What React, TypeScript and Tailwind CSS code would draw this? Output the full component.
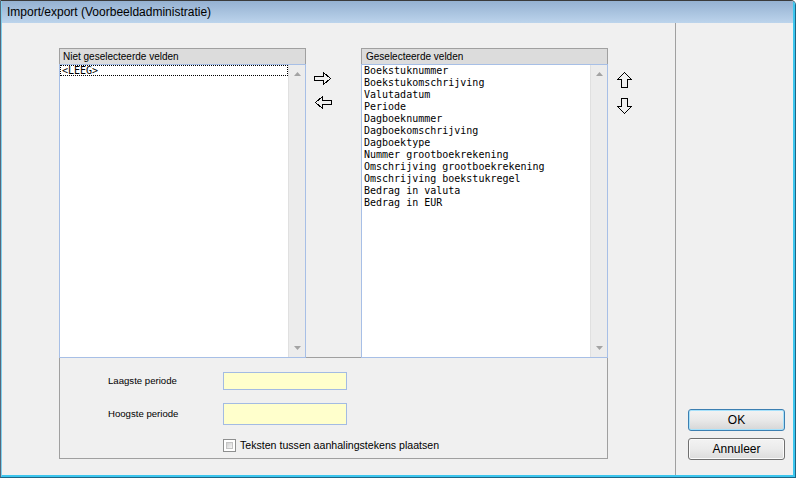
import React from "react";

const mono = { fontFamily: '"DejaVu Sans Mono", "Liberation Mono", monospace' };
const sans = { fontFamily: '"Liberation Sans", Arial, sans-serif' };

function ScrollBar() {
  return (
    <div className="w-[17px] h-full bg-[#ececec] border-l border-[#e0e0e0] flex flex-col items-center justify-between pt-[7px] pb-[7px]">
      <svg width="7" height="4" viewBox="0 0 7 4">
        <polygon points="0,4 3.5,0 7,4" fill="#a3a3a3" />
      </svg>
      <svg width="7" height="4" viewBox="0 0 7 4">
        <polygon points="0,0 3.5,4 7,0" fill="#a3a3a3" />
      </svg>
    </div>
  );
}

function RightArrow({ flip }: { flip?: boolean }) {
  return (
    <svg width="18" height="13" viewBox="0 0 18 13" style={flip ? { transform: "scaleX(-1)" } : undefined}>
      <polygon
        points="0.5,4.5 9.5,4.5 9.5,0.5 16.5,6.5 9.5,12.5 9.5,8.5 0.5,8.5"
        fill="none"
        stroke="#000"
        strokeWidth="1"
        shapeRendering="crispEdges"
      />
    </svg>
  );
}

function UpArrow({ flip }: { flip?: boolean }) {
  return (
    <svg width="16" height="16" viewBox="0 0 16 16" style={flip ? { transform: "scaleY(-1)" } : undefined}>
      <polygon
        points="7.5,0.5 14.5,7.5 10.5,7.5 10.5,15.5 4.5,15.5 4.5,7.5 0.5,7.5"
        fill="none"
        stroke="#000"
        strokeWidth="1"
        shapeRendering="crispEdges"
      />
    </svg>
  );
}

const selected = [
  "Boekstuknummer",
  "Boekstukomschrijving",
  "Valutadatum",
  "Periode",
  "Dagboeknummer",
  "Dagboekomschrijving",
  "Dagboektype",
  "Nummer grootboekrekening",
  "Omschrijving grootboekrekening",
  "Omschrijving boekstukregel",
  "Bedrag in valuta",
  "Bedrag in EUR",
];

export default function App() {
  return (
    <div
      className="w-[796px] h-[478px] flex flex-col bg-[#f0f0f0] border-t border-t-[#3a3a3a] border-l border-l-[#56687a] border-r border-r-[#1d6585] border-b border-b-[#1d6585] rounded-tr-[5px] overflow-hidden"
      style={sans}
    >
      <div className="flex-1 flex flex-col border-l border-l-[#7fd0ee] border-r-2 border-r-[#3cc6ee] border-b-2 border-b-[#3cc6ee]">
        {/* Title bar */}
        <div className="h-[22px] bg-gradient-to-b from-[#95b1d1] to-[#bcd4ec] flex items-center pl-[5px] text-[12px] text-black">
          Import/export (Voorbeeldadministratie)
        </div>

        {/* Body */}
        <div className="flex-1 flex">
          {/* Main area */}
          <div className="w-[673px] pt-[25px] pl-[57px] flex items-start">
            <div className="w-[549px] flex flex-col">
              <div className="flex h-[310px]">
                {/* Left panel */}
                <div className="w-[247px] flex flex-col">
                  <div className="h-[16px] border-t border-l border-r border-[#a0a0a0] bg-[#dcdcdc] text-[10px] leading-[15px] pl-[3px] text-black">
                    Niet geselecteerde velden
                  </div>
                  <div className="flex-1 border border-[#a7bfe6] bg-white flex">
                    <div className="flex-1">
                      <div
                        className="h-[11px] border border-dotted border-black leading-[9px] pl-[1px] text-[10px] text-black"
                        style={mono}
                      >
                        &lt;LEEG&gt;
                      </div>
                    </div>
                    <ScrollBar />
                  </div>
                </div>

                {/* Middle transfer arrows */}
                <div className="w-[55px] border-b border-[#a0a0a0] pt-[24px] pl-[8px] flex flex-col gap-[11px]">
                  <RightArrow />
                  <RightArrow flip />
                </div>

                {/* Right panel */}
                <div className="w-[247px] flex flex-col">
                  <div className="h-[16px] border-t border-l border-r border-[#a0a0a0] bg-[#dcdcdc] text-[10px] leading-[15px] pl-[4px] text-black">
                    Geselecteerde velden
                  </div>
                  <div className="flex-1 border border-[#a7bfe6] bg-white flex">
                    <div className="flex-1 pl-[2px]" style={mono}>
                      {selected.map((s) => (
                        <div key={s} className="h-[12px] leading-[12px] text-[10px] text-black whitespace-pre">
                          {s}
                        </div>
                      ))}
                    </div>
                    <ScrollBar />
                  </div>
                </div>
              </div>

              {/* Bottom section */}
              <div className="h-[101px] border-l border-r border-b border-[#a0a0a0] pt-[14px] pl-[48px] flex flex-col">
                <div className="flex items-center h-[18px]">
                  <div className="w-[115px] text-[9.6px] text-black">Laagste periode</div>
                  <div className="w-[124px] h-[18px] border border-[#a3bbe3] bg-[#ffffcc]" />
                </div>
                <div className="flex items-center h-[22px] mt-[13px]">
                  <div className="w-[115px] text-[9.6px] text-black">Hoogste periode</div>
                  <div className="w-[124px] h-[22px] border border-[#a3bbe3] bg-[#ffffcc]" />
                </div>
                <div className="flex items-center h-[13px] mt-[14px] pl-[115px]">
                  <div className="w-[13px] h-[13px] border border-[#8e8f8f] bg-white p-[2px]">
                    <div className="w-full h-full bg-gradient-to-br from-[#d0d0d0] to-[#f6f6f6] border border-[#c4c4c4]" />
                  </div>
                  <div className="ml-[4px] text-[10.6px] text-black leading-[13px]">
                    Teksten tussen aanhalingstekens plaatsen
                  </div>
                </div>
              </div>
            </div>

            {/* Up/down arrows */}
            <div className="ml-[9px] pt-[24px] flex flex-col gap-[10px]">
              <UpArrow />
              <UpArrow flip />
            </div>
          </div>

          {/* Right button column */}
          <div className="flex-1 border-l border-[#a0a0a0] flex flex-col justify-end items-start pl-[12px] pb-[15px] gap-[7px]">
            <div className="w-[97px] h-[22px] rounded-[3px] border border-[#3c7fb1] shadow-[inset_0_0_0_1px_#a6e1fb] bg-gradient-to-b from-[#f3f3f3] via-[#e9e9e9] to-[#d6d6d6] flex items-center justify-center text-[12px] text-black">
              OK
            </div>
            <div className="w-[97px] h-[22px] rounded-[3px] border border-[#707070] shadow-[inset_0_0_0_1px_#fbfbfb] bg-gradient-to-b from-[#f3f3f3] via-[#ebebeb] to-[#dcdcdc] flex items-center justify-center text-[12px] text-black">
              Annuleer
            </div>
          </div>
        </div>
      </div>
    </div>
  );
}
